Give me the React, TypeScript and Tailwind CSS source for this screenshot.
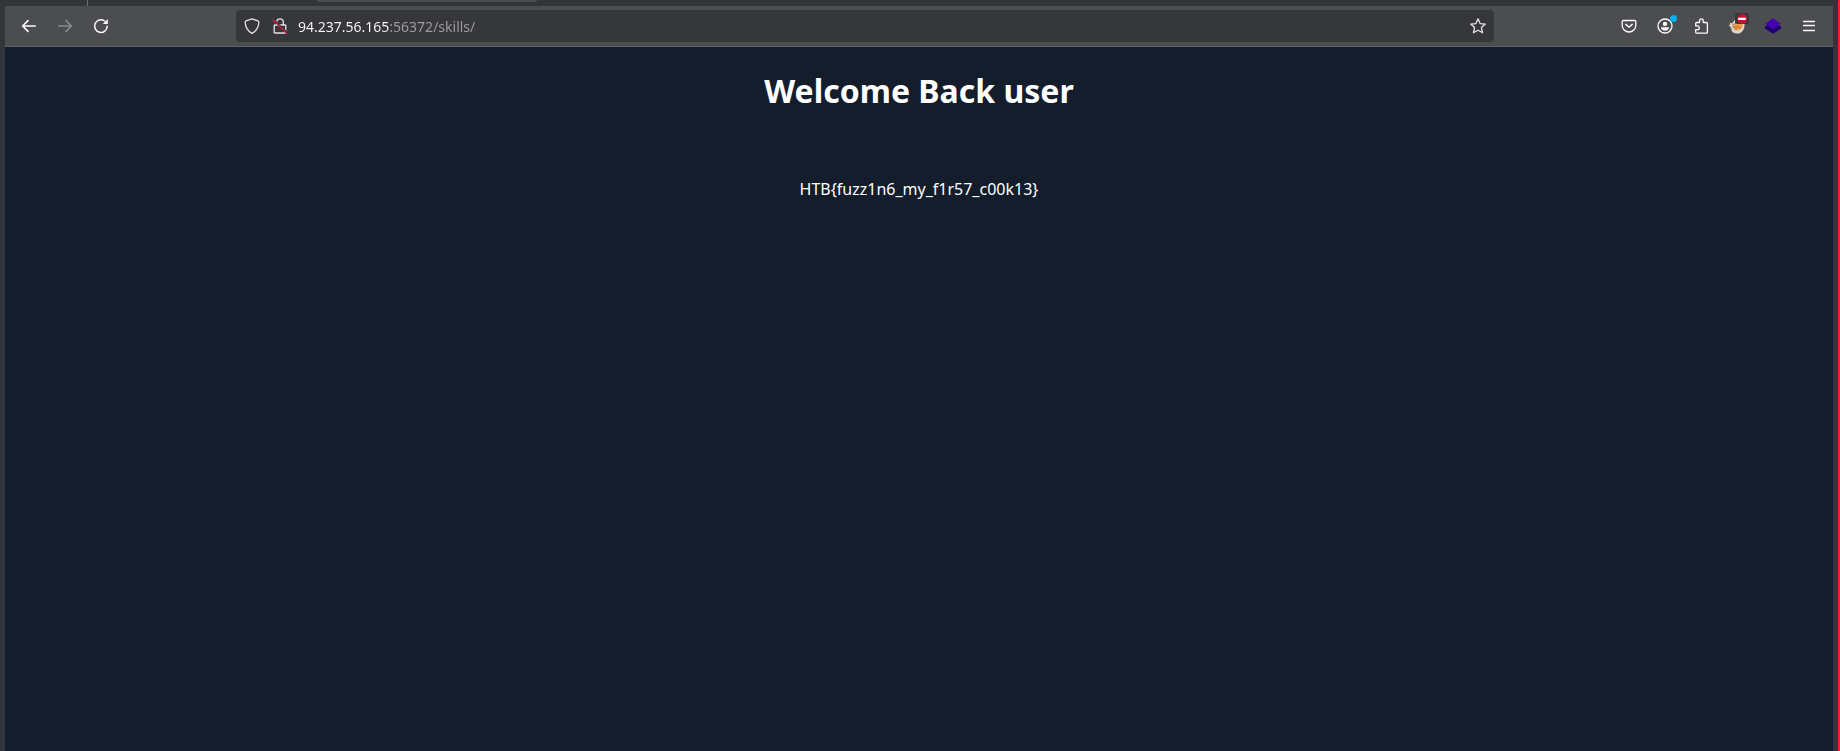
import type { ReactNode } from "react";

const iconProps = {
  width: 16,
  height: 16,
  viewBox: "0 0 16 16",
  fill: "none",
  stroke: "currentColor",
  strokeWidth: 1.3,
  strokeLinecap: "round" as const,
  strokeLinejoin: "round" as const,
  "aria-hidden": true,
};

function ToolButton({ label, disabled, children }: { label: string; disabled?: boolean; children: ReactNode }) {
  return (
    <button
      type="button"
      aria-label={label}
      disabled={disabled}
      className="flex h-8 w-9 shrink-0 items-center justify-center text-[#fbfbfe] disabled:text-[#8b8c8f]"
    >
      {children}
    </button>
  );
}

function BackIcon() {
  return (
    <svg {...iconProps} strokeWidth={1.6}>
      <path d="M14.3 8H1.8M7 2.6 1.6 8 7 13.4" />
    </svg>
  );
}

function ForwardIcon() {
  return (
    <svg {...iconProps} strokeWidth={1.5}>
      <path d="M1.7 8h12.5M9 2.6 14.4 8 9 13.4" />
    </svg>
  );
}

function ReloadIcon() {
  return (
    <svg {...iconProps} strokeWidth={1.5}>
      <path d="M14.2 8.2A6.3 6.3 0 1 1 11.6 3" />
      <path d="M14.8 1.1v5h-5z" fill="currentColor" stroke="none" />
    </svg>
  );
}

function ShieldIcon() {
  return (
    <svg {...iconProps}>
      <path d="M8 .8 13.9 2.9c.6.2.9.7.9 1.2-.1 4.8-2.1 8.9-6.8 11.200C3.300 13 1.300 8.900 1.200 4.100c0-.5.3-1 .9-1.200z" />
    </svg>
  );
}

function InsecureLockIcon() {
  return (
    <svg {...iconProps}>
      <path d="M4.700 7V4.100a3.300 3.300 0 0 1 6.600 0V7M3 7h10c.5 0 .8.3.8.8v6.400c0 .5-.3.8-.8.8H3c-.5 0-.8-.3-.8-.8V7.800C2.200 7.300 2.500 7 3 7z" />
      <path d="M2.400 2.200 15 14.400" stroke="#36373b" strokeWidth={1.6} />
      <path d="M1.200 2.300 14.600 15.400" stroke="#e0163f" strokeWidth={1.3} />
    </svg>
  );
}

function StarIcon() {
  return (
    <svg {...iconProps} strokeWidth={1.3}>
      <path d="m8 .8 2.100 4.800 5.200.5-3.900 3.500 1.200 5.200L8 12.200l-4.600 2.600 1.200-5.200L.7 6.100l5.200-.5z" />
    </svg>
  );
}

function PocketIcon() {
  return (
    <svg {...iconProps}>
      <path d="M2.400 2.500h11.200c.7 0 1.200.5 1.200 1.200v3.500a6.800 6.800 0 0 1-13.600 0V3.700c0-.7.5-1.200 1.200-1.200z" />
      <path d="M4.800 6.400 8 9.300l3.200-2.900" strokeWidth={1.5} />
    </svg>
  );
}

function AccountIcon() {
  return (
    <svg {...iconProps}>
      <circle cx="8" cy="8" r="7" />
      <circle cx="8" cy="5.900" r="2.200" fill="currentColor" stroke="none" />
      <path d="M3.800 9.300h8.400c-.3 2.100-2 3.500-4.200 3.500S4.100 11.400 3.800 9.300z" fill="currentColor" stroke="none" />
    </svg>
  );
}

function ExtensionsIcon() {
  return (
    <svg {...iconProps}>
      <path d="M2.700 5.500c0-.6.4-1 1-1h2.900V2.600a1.800 1.800 0 0 1 3.600 0v1.900h3.200c.6 0 1 .4 1 1v8.700c0 .6-.4 1-1 1H3.700c-.6 0-1-.4-1-1v-2.500h1.700a1.900 1.900 0 0 0 0-3.800H2.700z" />
    </svg>
  );
}

function FoxIcon() {
  return (
    <svg width="16" height="16" viewBox="0 0 16 16" aria-hidden="true">
      <path d="M.6 4.600 3 5.400 6 1.500l3.500 1.700 5.900 2.400c.8 4.900-2 10-7.200 10-3.500 0-6-1.800-6.500-5.400L0 7.200l1.300-.9z" fill="#ddd5cb" />
      <path d="M3.400 7.800c2-.9 3.200-2.200 5.400-2.200l4.600.4c.7 3.300-1 5.400-4.200 5.900-3 .4-5-.9-5.800-4.100z" fill="#f09a45" />
      <path d="M3.500 8.300c1.800 1.600 3.600 1.200 4.800.2l3.600 1.700M5.500 11.400l2.800-.4" fill="none" stroke="#a8622f" strokeWidth=".8" />
      <path d="m6 1.700 1.200 3.500-3.700 1.600M1 8.500l1.700 3" fill="none" stroke="#5f5550" strokeWidth=".7" />
    </svg>
  );
}

function LayersIcon() {
  return (
    <svg width="16" height="16" viewBox="0 0 16 16" aria-hidden="true">
      <path d="m8 4 8 4.600v2L8 15.800 0 10.600v-2z" fill="#1c0073" />
      <path d="m8 .2 8 5.500-8 5.500-8-5.500z" fill="#4503ac" />
    </svg>
  );
}

function MenuIcon() {
  return (
    <svg {...iconProps}>
      <path d="M2.500 3.500h11M2.500 7.500h11M2.500 12.500h11" />
    </svg>
  );
}

export default function App() {
  return (
    <div className="flex min-h-screen flex-col border-r-2 border-[#e22828] bg-[#31363b] px-[5px] font-['Noto_Sans',sans-serif]">
      <div className="flex h-[6px] shrink-0 items-start">
        <div className="ml-[82px] h-full w-px bg-[#6b6f73]" />
        <div className="ml-[229px] h-[2px] w-[220px] rounded-b-sm bg-[#4b4d51]" />
      </div>

      <header className="flex h-[41px] shrink-0 items-center border-b border-[#606266] bg-[#4b4d51] px-[6px]">
        <nav aria-label="History" className="flex">
          <ToolButton label="Back"><BackIcon /></ToolButton>
          <ToolButton label="Forward" disabled><ForwardIcon /></ToolButton>
          <ToolButton label="Reload"><ReloadIcon /></ToolButton>
        </nav>

        <div className="mx-[117px] flex h-8 min-w-0 flex-1 items-center rounded bg-[#36373b] pl-2 text-[#e4e4e7]">
          <button type="button" aria-label="Tracking protection" className="mr-3"><ShieldIcon /></button>
          <button type="button" aria-label="Connection not secure" className="mr-[10px]"><InsecureLockIcon /></button>
          <input
            type="text"
            aria-label="Address"
            defaultValue="94.237.56.165:56372/skills/"
            spellCheck={false}
            className="h-8 min-w-0 flex-1 bg-[linear-gradient(to_right,#fbfbfe_91px,#9c9da0_91px)] bg-clip-text text-sm text-transparent caret-white outline-none"
          />
          <button type="button" aria-label="Bookmark this page" className="mr-2"><StarIcon /></button>
        </div>

        <div className="flex">
          <ToolButton label="Save to Pocket"><PocketIcon /></ToolButton>
          <ToolButton label="Account">
            <span className="relative">
              <AccountIcon />
              <span className="absolute -top-[3px] -right-[4px] size-[7px] rounded-full bg-[#00aef5]" />
            </span>
          </ToolButton>
          <ToolButton label="Extensions"><ExtensionsIcon /></ToolButton>
          <ToolButton label="FoxyProxy">
            <span className="relative">
              <FoxIcon />
              <span className="absolute -top-[5px] -right-[4px] flex h-[11px] w-[14px] items-center justify-center rounded-xs bg-[#36393c]">
                <svg width="10" height="10" viewBox="0 0 10 10" aria-hidden="true">
                  <circle cx="5" cy="5" r="5" fill="#c5112e" />
                  <path d="M1.200 3.700h7.600v2.300H1.200z" fill="#fff" />
                </svg>
              </span>
            </span>
          </ToolButton>
          <ToolButton label="Wappalyzer"><LayersIcon /></ToolButton>
          <ToolButton label="Open menu"><MenuIcon /></ToolButton>
        </div>
      </header>

      <main className="flex-1 bg-[#141d2b] pt-[22px] text-center text-white">
        <h1 className="text-[32px] leading-[44px] font-bold">Welcome Back user</h1>
        <p className="mt-16 text-base leading-6">{"HTB{fuzz1n6_my_f1r57_c00k13}"}</p>
      </main>
    </div>
  );
}
